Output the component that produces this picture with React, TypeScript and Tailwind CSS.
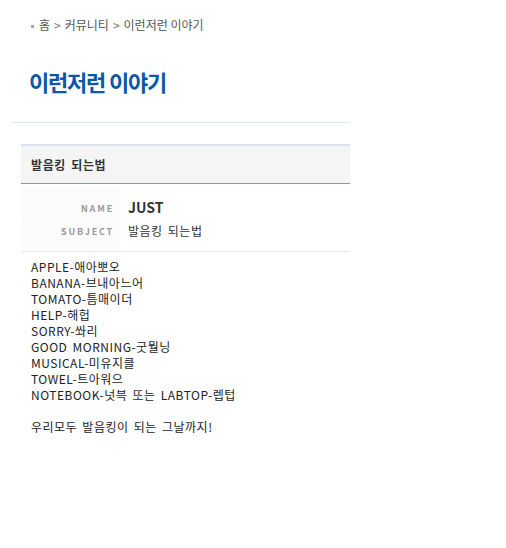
export default function App() {
    const lines = [
        "APPLE-애아뽀오",
        "BANANA-브내아느어",
        "TOMATO-틈매이더",
        "HELP-해헙",
        "SORRY-쏴리",
        "GOOD MORNING-굿뭘닝",
        "MUSICAL-미유지클",
        "TOWEL-트아워으",
        "NOTEBOOK-넛븍 또는 LABTOP-렙텁",
    ];

    return (
        <div
            className="min-h-[548px] w-[506px] bg-white text-[#333]"
            style={{ fontFamily: '"Noto Sans CJK KR", "Noto Sans", sans-serif' }}
        >
            <div className="px-[31px] pt-[17px] flex items-center gap-[4px] text-[12px] leading-[16px] text-[#555]">
                <span className="inline-block w-[3px] h-[3px] bg-[#aaa] mr-[1px] mt-[3px]" />
                <span>홈</span>
                <span className="text-[#777]">&gt;</span>
                <span>커뮤니티</span>
                <span className="text-[#777]">&gt;</span>
                <span>이런저런 이야기</span>
            </div>

            <h1 className="pl-[29px] mt-[33px] text-[22px] leading-[30px] font-bold tracking-[-1.2px] text-[#0b58a6]">
                이런저런 이야기
            </h1>

            <div className="ml-[12px] w-[338px] mt-[26px] border-t border-[#dfe7ef]" />

            <div className="ml-[21px] w-[329px] mt-[21px]">
                <div className="border-t-2 border-[#dae3ec] border-b border-b-[#7c9db6] bg-[#f5f5f5] h-[40px] flex items-center px-[10px]">
                    <span className="text-[12px] font-bold text-[#333] tracking-[0.6px] [word-spacing:2px]">발음킹 되는법</span>
                </div>

                <div className="border-b border-[#e8e8e8] pt-[2px] pb-[2px]">
                    <div className="flex h-[33px]">
                        <div className="w-[99px] bg-[#fbfbfb] flex items-end justify-end pr-[6px] pb-[4px] text-[9px] font-bold tracking-[1.8px] text-[#999]">
                            NAME
                        </div>
                        <div className="flex items-end pl-[8px] pb-[1px] text-[14px] font-bold text-[#333]">JUST</div>
                    </div>
                    <div className="flex h-[29px] mt-[1px]">
                        <div className="w-[99px] bg-[#fbfbfb] flex items-start justify-end pt-[5px] pr-[6px] text-[9px] font-bold tracking-[1.8px] text-[#999]">
                            SUBJECT
                        </div>
                        <div className="flex items-start pt-[2px] pl-[8px] text-[12px] text-[#333] tracking-[0.5px] [word-spacing:2px]">발음킹 되는법</div>
                    </div>
                </div>

                <div className="pl-[10px] pt-[7px] text-[12px] leading-[16px] text-[#222] tracking-[0.5px] [word-spacing:2px]">
                    {lines.map((l) => (
                        <div key={l}>{l}</div>
                    ))}
                    <div className="h-[16px]" />
                    <div>우리모두 발음킹이 되는 그날까지!</div>
                </div>
            </div>
        </div>
    );
}
